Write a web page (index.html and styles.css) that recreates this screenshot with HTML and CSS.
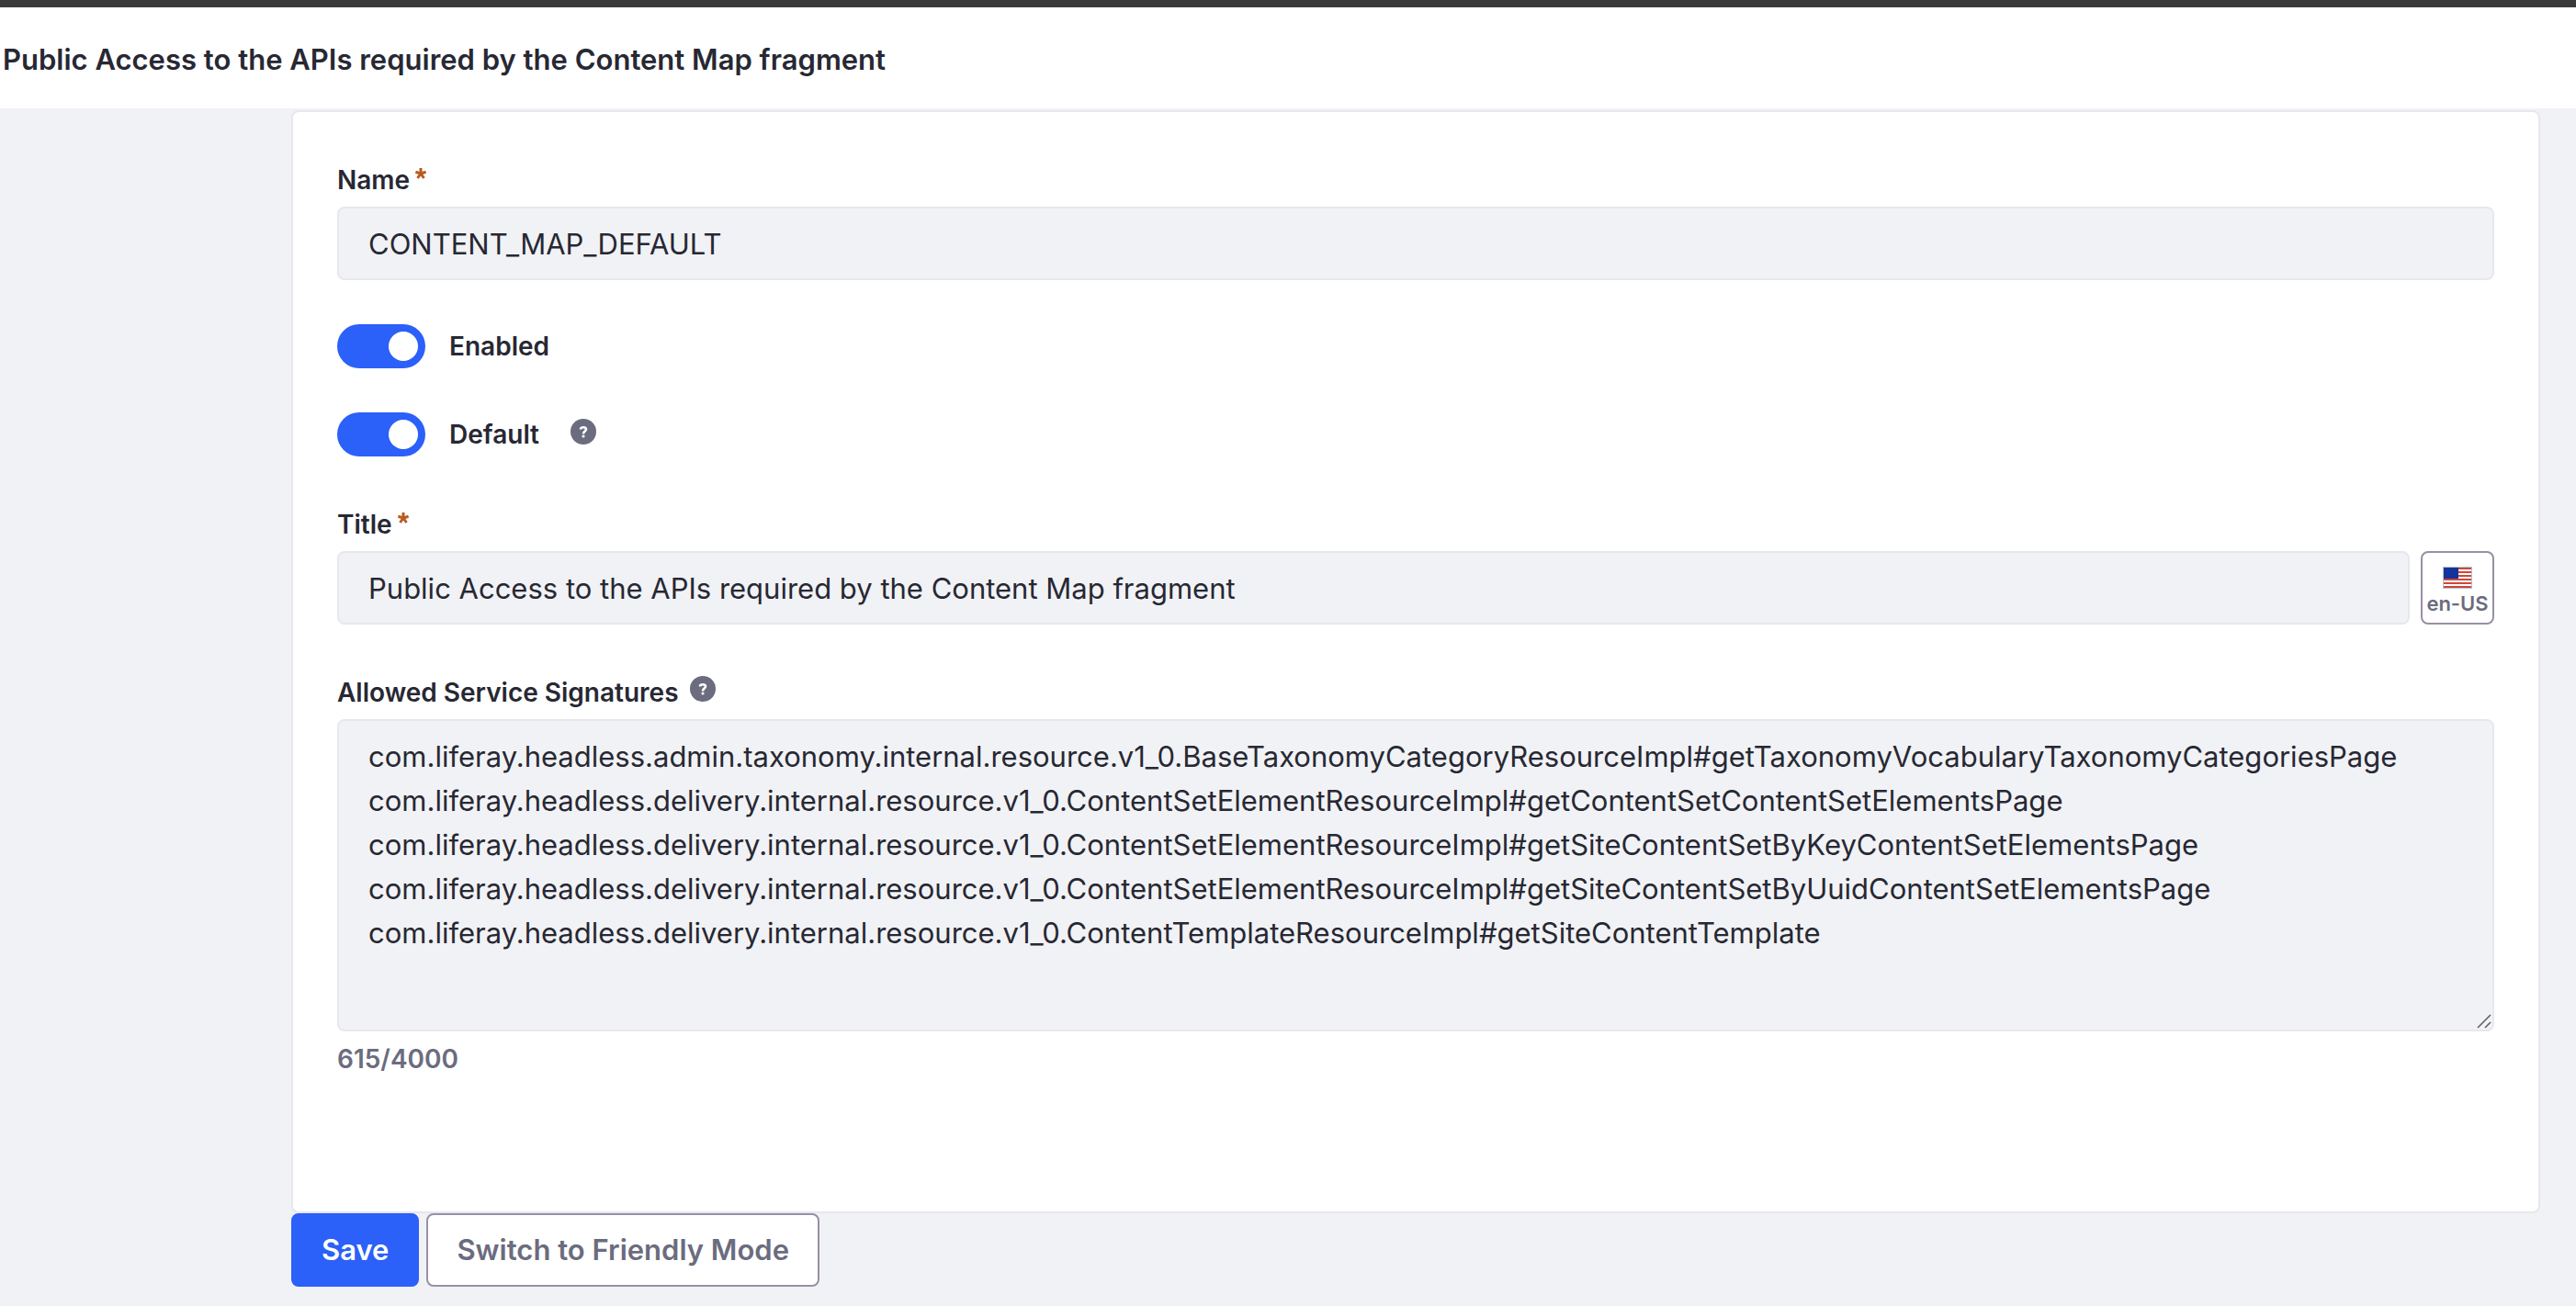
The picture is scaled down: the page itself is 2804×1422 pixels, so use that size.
FILE: index.html
```html
<!DOCTYPE html>
<html lang="en-US">
<head>
<meta charset="utf-8">
<title>Public Access to the APIs required by the Content Map fragment</title>
<link rel="stylesheet" href="styles.css">
</head>
<body>
<header class="header">
  <h1 class="header-title">Public Access to the APIs required by the Content Map fragment</h1>
</header>
<main class="main">
  <form class="form">
    <div class="sheet">
      <div class="field">
        <div class="label-row">
          <label class="label" for="name">Name</label>
          <svg class="required" viewBox="0 0 12 12" aria-hidden="true"><path d="M6 0V6M0.4 4.2L6 6M2.5 11L6 6M9.5 11L6 6M11.6 4.2L6 6"/></svg>
        </div>
        <input class="input" id="name" type="text" value="CONTENT_MAP_DEFAULT" readonly>
      </div>
      <div class="toggle-row">
        <input class="toggle" id="enabled" type="checkbox" role="switch" checked>
        <label class="label" for="enabled">Enabled</label>
      </div>
      <div class="toggle-row">
        <input class="toggle" id="default" type="checkbox" role="switch" checked>
        <label class="label" for="default">Default</label>
        <svg class="help help-toggle" viewBox="0 0 28 28" aria-hidden="true"><circle cx="14" cy="14" r="14"/><path d="M11 11.6C11 10 12.2 9.2 14 9.2C15.9 9.2 17 10.1 17 11.6C17 13.6 14 13.6 14 16.4"/><circle class="help-dot" cx="14" cy="19" r="1.6"/></svg>
      </div>
      <div class="field field-title">
        <div class="label-row">
          <label class="label" for="title">Title</label>
          <svg class="required" viewBox="0 0 12 12" aria-hidden="true"><path d="M6 0V6M0.4 4.2L6 6M2.5 11L6 6M9.5 11L6 6M11.6 4.2L6 6"/></svg>
        </div>
        <div class="input-group">
          <input class="input" id="title" type="text" value="Public Access to the APIs required by the Content Map fragment" readonly>
          <button class="locale" type="button">
            <svg class="flag" viewBox="0 0 32 24" aria-hidden="true"><path fill="#b3c4cf" d="M0 0h32v24H0z"/><path fill="#fff" d="M1 1h30v22H1z"/><path fill="#d0463b" d="M1 1h30v2H1zM1 5h30v2H1zM1 9h30v2H1zM1 13h30v2H1zM1 17h30v2H1zM1 21h30v2H1z"/><path fill="#14349b" d="M1 1h16v12H1z"/></svg>
            <span class="locale-text">en-US</span>
          </button>
        </div>
      </div>
      <div class="field field-signatures">
        <div class="label-row">
          <label class="label" for="signatures">Allowed Service Signatures</label>
          <svg class="help" viewBox="0 0 28 28" aria-hidden="true"><circle cx="14" cy="14" r="14"/><path d="M11 11.6C11 10 12.2 9.2 14 9.2C15.9 9.2 17 10.1 17 11.6C17 13.6 14 13.6 14 16.4"/><circle class="help-dot" cx="14" cy="19" r="1.6"/></svg>
        </div>
        <div class="textarea-wrap">
          <textarea class="input textarea" id="signatures" readonly>com.liferay.headless.admin.taxonomy.internal.resource.v1_0.BaseTaxonomyCategoryResourceImpl#getTaxonomyVocabularyTaxonomyCategoriesPage
com.liferay.headless.delivery.internal.resource.v1_0.ContentSetElementResourceImpl#getContentSetContentSetElementsPage
com.liferay.headless.delivery.internal.resource.v1_0.ContentSetElementResourceImpl#getSiteContentSetByKeyContentSetElementsPage
com.liferay.headless.delivery.internal.resource.v1_0.ContentSetElementResourceImpl#getSiteContentSetByUuidContentSetElementsPage
com.liferay.headless.delivery.internal.resource.v1_0.ContentTemplateResourceImpl#getSiteContentTemplate</textarea>
          <svg class="grip" viewBox="0 0 16 16" aria-hidden="true"><path d="M1 15L15 1M9 15L15 9"/></svg>
        </div>
        <p class="counter">615/4000</p>
      </div>
    </div>
    <div class="actions">
      <button class="button button-primary" type="submit">Save</button>
      <button class="button button-secondary" type="button">Switch to Friendly Mode</button>
    </div>
  </form>
</main>
</body>
</html>
```
FILE: styles.css
```css
* {
  box-sizing: border-box;
}

body {
  margin: 0;
  background: #f1f2f5;
  color: #272833;
  font-family: Inter, "Liberation Sans", sans-serif;
  font-size: 31px;
  line-height: 48px;
}

.header {
  display: flex;
  align-items: center;
  padding: 33px 3px 29px;
  border-top: 8px solid #3b3a3a;
  background: #fff;
}

.header-title {
  margin: 0;
  font-size: 31px;
  font-weight: 600;
}

.main {
  padding: 2px 39px 20px 317px;
}

.sheet {
  padding: 52px 48px 144px;
  border: 2px solid #e7e7ed;
  border-radius: 8px;
  background: #fff;
}

.label-row {
  display: flex;
  align-items: center;
  height: 44px;
  margin-bottom: 7px;
}

.label,
.counter {
  font-size: 28px;
  font-weight: 600;
  line-height: 44px;
}

.required {
  width: 12px;
  height: 12px;
  margin: 0 0 14px 6px;
  fill: none;
  stroke: #b95a20;
  stroke-width: 3;
}

.help {
  width: 28px;
  height: 28px;
  margin: 0 0 8px 12px;
  fill: #6b6c7e;
}

.help path {
  fill: none;
  stroke: #fff;
  stroke-width: 2.6;
}

.help .help-dot {
  fill: #fff;
}

.help-toggle {
  margin: 0 0 6px 34px;
}

.input {
  display: block;
  width: 100%;
  height: 80px;
  margin: 0;
  padding: 0 32px;
  border: 2px solid #e7e7ed;
  border-radius: 8px;
  outline: 0;
  background: #f1f2f5;
  color: inherit;
  font: inherit;
}

.toggle-row {
  display: flex;
  align-items: center;
  height: 48px;
  margin-top: 48px;
}

.toggle {
  display: flex;
  align-items: center;
  justify-content: flex-end;
  appearance: none;
  width: 96px;
  height: 48px;
  margin: 0 26px 0 0;
  padding: 8px;
  border-radius: 24px;
  background: #2b60f9;
}

.toggle::before {
  content: "";
  width: 32px;
  height: 32px;
  border-radius: 50%;
  background: #fff;
}

.field-title,
.field-signatures {
  margin-top: 52px;
}

.input-group {
  display: flex;
  gap: 12px;
}

.input-group .input {
  flex: 1;
  width: auto;
}

.locale {
  display: flex;
  flex: none;
  flex-direction: column;
  align-items: center;
  width: 80px;
  height: 80px;
  padding: 15px 0 0;
  border: 2px solid #9890a3;
  border-radius: 8px;
  background: #fff;
  color: #6b6c7e;
  font: inherit;
}

.flag {
  width: 32px;
  height: 24px;
}

.locale-text {
  font-size: 22px;
  font-weight: 600;
  line-height: 32px;
}

.textarea-wrap {
  position: relative;
}

.textarea {
  height: 340px;
  padding: 15px 32px;
  resize: none;
  overflow: hidden;
}

.grip {
  position: absolute;
  right: 3px;
  bottom: 3px;
  width: 16px;
  height: 16px;
  fill: none;
  stroke: #5a5a62;
  stroke-width: 1.5;
}

.counter {
  margin: 8px 0 0;
  color: #6b6c7e;
}

.actions {
  display: flex;
  gap: 8px;
}

.button {
  height: 80px;
  padding: 0 31px;
  border: 2px solid #9890a3;
  border-radius: 8px;
  background: #fff;
  color: #6b6c7e;
  font: inherit;
  font-weight: 600;
}

.button-primary {
  border-color: #2b60f9;
  background: #2b60f9;
  color: #fff;
}
```
